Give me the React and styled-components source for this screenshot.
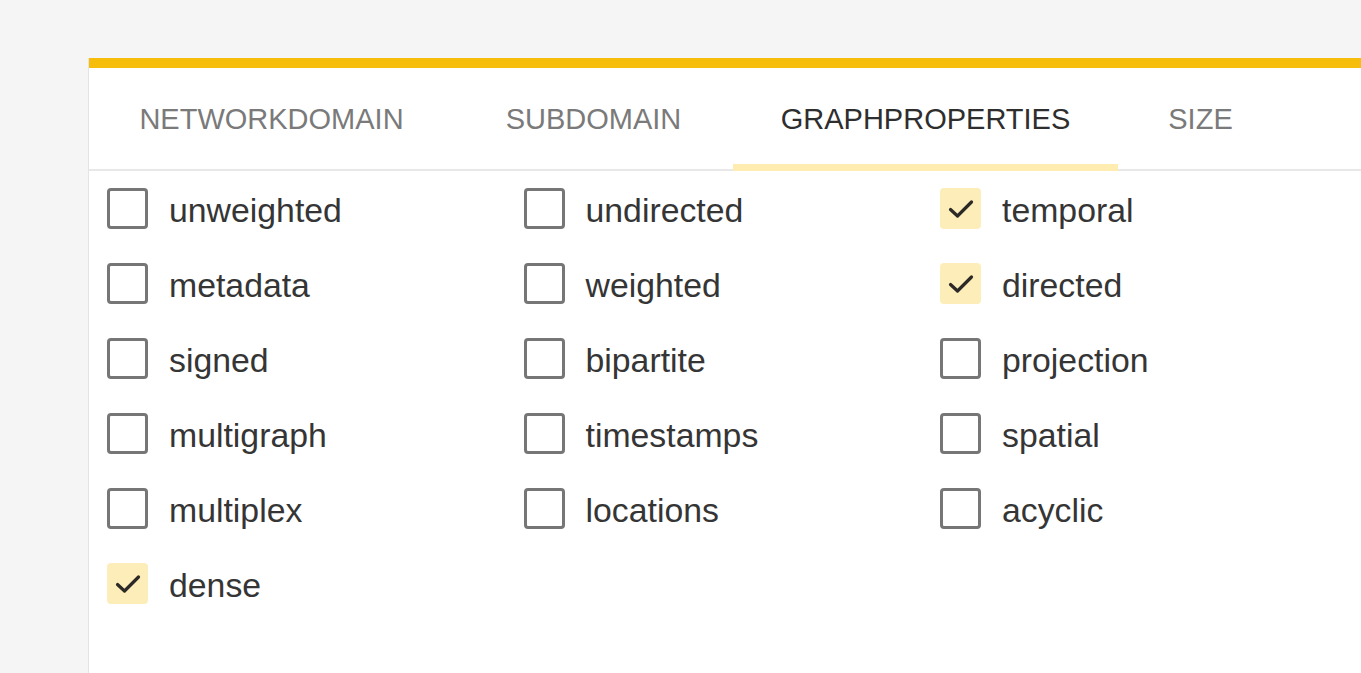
import styled, { createGlobalStyle } from 'styled-components';

const GlobalStyle = createGlobalStyle`
  html, body {
    margin: 0;
    padding: 0;
    background: #f5f5f5;
    font-family: "Liberation Sans", Arial, sans-serif;
    overflow: hidden;
  }
`;

const TABS = [
  { label: 'NetworkDomain', width: 365 },
  { label: 'SubDomain', width: 279 },
  { label: 'GraphProperties', width: 385 },
  { label: 'Size', width: 165 }
];
const ACTIVE_TAB = 2;

const OPTIONS = [
  { label: 'unweighted' },
  { label: 'undirected' },
  { label: 'temporal', checked: true },
  { label: 'metadata' },
  { label: 'weighted' },
  { label: 'directed', checked: true },
  { label: 'signed' },
  { label: 'bipartite' },
  { label: 'projection' },
  { label: 'multigraph' },
  { label: 'timestamps' },
  { label: 'spatial' },
  { label: 'multiplex' },
  { label: 'locations' },
  { label: 'acyclic' },
  { label: 'dense', checked: true }
];

const CheckIcon = () => (
  <svg width="26" height="20" viewBox="0 0 26 20" fill="none">
    <polyline
      points="2.5,10.5 9.5,17 23.5,3"
      stroke="#2b2a26"
      strokeWidth="3.2"
      strokeLinecap="round"
      strokeLinejoin="round"
    />
  </svg>
);

const App = () => (
  <>
    <GlobalStyle />
    <Page>
      <Card>
        <TabBar>
          {TABS.map((tab, i) => (
            <Tab key={tab.label} $width={tab.width} $active={i === ACTIVE_TAB}>
              {tab.label}
            </Tab>
          ))}
        </TabBar>
        <OptionGrid>
          {OPTIONS.map((opt) => (
            <Option key={opt.label}>
              <Box $checked={opt.checked}>{opt.checked && <CheckIcon />}</Box>
              <Label>{opt.label}</Label>
            </Option>
          ))}
        </OptionGrid>
      </Card>
    </Page>
  </>
);

const Page = styled.div`
  height: 673px;
  padding: 58px 0 0 89px;
  box-sizing: border-box;
`;

const Card = styled.div`
  width: 1300px;
  height: 615px;
  background: #fff;
  border-top: 10px solid #f6be0b;
  box-shadow: -1px 0 0 #e4e4e4;
`;

const TabBar = styled.div`
  display: flex;
  height: 101px;
  border-bottom: 2px solid #e8e8e8;
`;

const Tab = styled.div`
  display: flex;
  align-items: center;
  justify-content: center;
  box-sizing: border-box;
  width: ${(p) => p.$width}px;
  height: 103px;
  padding-top: 5px;
  margin-bottom: -2px;
  font-size: 29px;
  line-height: 1;
  white-space: nowrap;
  text-transform: uppercase;
  color: ${(p) => (p.$active ? '#2e2e2e' : '#7a7a7a')};
  border-bottom: 5px solid ${(p) => (p.$active ? '#ffecb0' : 'transparent')};
  box-shadow: ${(p) => (p.$active ? 'inset 0 -2px 0 #ffecb0' : 'none')};
`;

const OptionGrid = styled.div`
  display: grid;
  grid-template-columns: repeat(3, 416.5px);
  grid-auto-rows: 75px;
  padding-left: 18px;
`;

const Option = styled.div`
  display: flex;
  align-items: center;
  gap: 21px;
`;

const Box = styled.div`
  width: 41px;
  height: 41px;
  box-sizing: border-box;
  border-radius: 4px;
  border: 3px solid ${(p) => (p.$checked ? '#fdedb8' : '#767676')};
  background: ${(p) => (p.$checked ? '#fdedb8' : '#fff')};
  display: flex;
  align-items: center;
  justify-content: center;
  flex-shrink: 0;
`;

const Label = styled.span`
  font-size: 33.8px;
  color: #353535;
  line-height: 1;
  padding-top: 5px;
`;

export default App;
